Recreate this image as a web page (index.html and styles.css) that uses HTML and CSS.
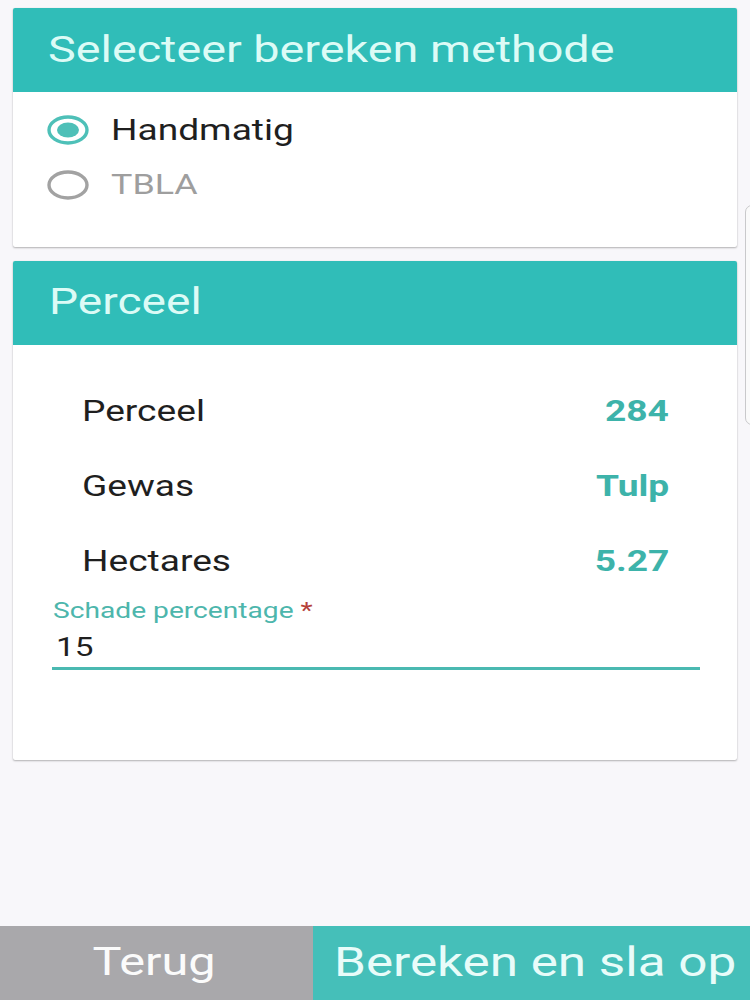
FILE: index.html
```html
<!DOCTYPE html>
<html lang="nl">
<head>
<meta charset="utf-8">
<title>Bereken methode</title>
<link rel="stylesheet" href="styles.css">
</head>
<body>
<div class="page">
  <main class="content">
    <section class="card card-method">
      <header class="card-head"><span class="wide">Selecteer bereken methode</span></header>
      <div class="card-body method-body">
        <label class="radio-row">
          <svg class="radio" width="42" height="30" viewBox="0 0 42 30"><ellipse cx="21" cy="15" rx="19" ry="13" fill="none" stroke="#4ec0b8" stroke-width="3.4"/><ellipse cx="21" cy="15" rx="11" ry="7.5" fill="#4ec0b8"/></svg>
          <span class="wide radio-text">Handmatig</span>
        </label>
        <label class="radio-row off">
          <svg class="radio" width="42" height="30" viewBox="0 0 42 30"><ellipse cx="21" cy="15" rx="19" ry="13" fill="none" stroke="#a2a2a2" stroke-width="3.4"/></svg>
          <span class="wide radio-text">TBLA</span>
        </label>
      </div>
    </section>

    <section class="card card-plot">
      <header class="card-head"><span class="wide">Perceel</span></header>
      <div class="card-body plot-body">
        <div class="info-row"><span class="wide label">Perceel</span><span class="wide-r value">284</span></div>
        <div class="info-row"><span class="wide label">Gewas</span><span class="wide-r value">Tulp</span></div>
        <div class="info-row"><span class="wide label">Hectares</span><span class="wide-r value">5.27</span></div>
        <div class="field">
          <div class="field-label"><span class="wide">Schade percentage <span class="req">*</span></span></div>
          <div class="field-input"><span class="wide">15</span></div>
        </div>
      </div>
    </section>
  </main>
  <footer class="actions">
    <button class="btn btn-back"><span class="wide-c">Terug</span></button>
    <button class="btn btn-save"><span class="wide-c">Bereken en sla op</span></button>
  </footer>
  <div class="edge-handle"></div>
</div>
</body>
</html>
```
FILE: styles.css
```css
* { box-sizing: border-box; }
html, body { margin: 0; padding: 0; }
body {
  background: #f8f7fa;
  font-family: Roboto, "Liberation Sans", sans-serif;
  color: #212121;
}
.page {
  position: relative;
  height: 1000px;
  display: flex;
  flex-direction: column;
  overflow: hidden;
}
.content {
  flex: 1;
  padding-top: 8px;
}
.wide, .wide-r, .wide-c {
  display: inline-block;
  white-space: nowrap;
  transform: scaleX(1.28);
  transform-origin: left center;
}
.wide-r { transform-origin: right center; }
.wide-c { transform-origin: center center; }

.card {
  margin: 0 13px;
  background: #ffffff;
  border-radius: 2px;
  box-shadow: 0 1px 2px rgba(0,0,0,0.28), 0 0 1px rgba(0,0,0,0.12);
  overflow: hidden;
}
.card + .card { margin-top: 14px; }
.card-head {
  height: 84px;
  background: #30bdb8;
  color: #dcfbf6;
  font-size: 36px;
  display: flex;
  align-items: center;
  padding-left: 35px;
  padding-bottom: 2px;
}
.card-method .card-head { font-size: 36.5px; }
.card-plot .card-head { padding-left: 36px; }

.method-body {
  padding: 10px 0 35px 34px;
}
.radio-row {
  height: 55px;
  display: flex;
  align-items: center;
  gap: 22px;
  font-size: 29px;
  color: #1f1f1f;
}
.radio { display: block; flex: none; }
.radio-row.off { color: #9e9e9e; font-size: 28px; }

.plot-body {
  height: 415px;
  padding: 28px 68px 0 69px;
}
.info-row {
  height: 75px;
  display: flex;
  align-items: center;
  justify-content: space-between;
  font-size: 29px;
}
.label { color: #1f1f1f; }
.value { color: #3db3aa; font-weight: 700; }

.field {
  margin: 0 -31px 0 -30px;
}
.field-label {
  height: 25px;
  display: flex;
  align-items: center;
  font-size: 22px;
  color: #4db6ac;
  padding-left: 1px;
}
.req { color: #b5413a; }
.field-input {
  height: 47px;
  display: flex;
  align-items: center;
  padding: 4px 0 0 4px;
  font-size: 26px;
  color: #1f1f1f;
  border-bottom: 3px solid #4ab9b1;
}

.actions {
  height: 74px;
  display: flex;
}
.btn {
  border: 0;
  margin: 0;
  padding: 0 0 2px;
  font-family: Roboto, "Liberation Sans", sans-serif;
  font-size: 38px;
  display: flex;
  align-items: center;
  justify-content: center;
}
.btn-back {
  width: 313px;
  background: #a9a8ab;
  color: #fbfbfb;
  padding-right: 4px;
}
.btn-save {
  flex: 1;
  background: #45bfb9;
  color: #e8fcf9;
  font-size: 40px;
  padding-left: 8px;
}

.edge-handle {
  position: absolute;
  left: 745px;
  top: 205px;
  width: 14px;
  height: 220px;
  border: 1px solid #c9c9cb;
  border-radius: 7px 0 0 7px;
  background: #fafafa;
}
```
